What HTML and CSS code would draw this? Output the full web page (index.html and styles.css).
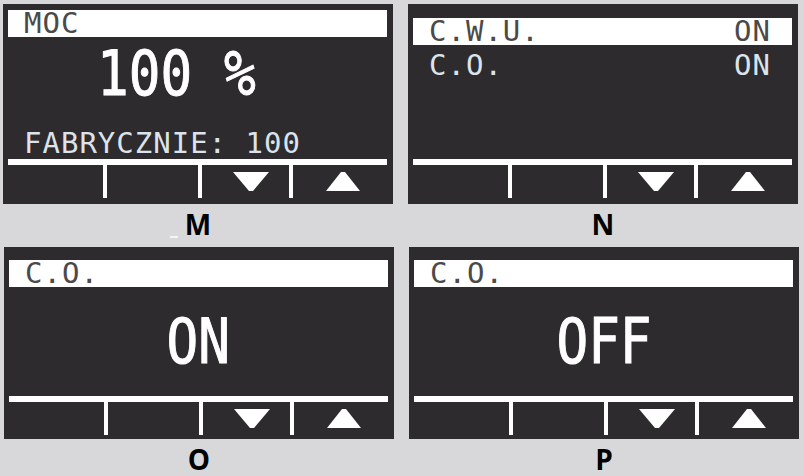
FILE: index.html
```html
<!DOCTYPE html>
<html lang="pl">
<head>
  <meta charset="UTF-8" />
  <meta name="viewport" content="width=device-width, initial-scale=1.0"/>
  <title>Ekrany sterownika</title>
  <link rel="stylesheet" href="styles.css">
</head>
<body>
  <div class="sheet">

    <!-- M: moc -->
    <div class="cell">
      <div class="panel panel-value">
        <div class="title">MOC</div>
        <div class="content">
          <div class="big big-left"><span>100 %</span></div>
          <div class="caption">FABRYCZNIE: 100</div>
        </div>
        <div class="keys">
          <div class="key"></div>
          <div class="key"></div>
          <div class="key key-down">
            <svg width="36" height="19" viewBox="0 0 36 19"><polygon points="0,0 36,0 20,19 16,19" fill="#fff"/></svg>
          </div>
          <div class="key key-up">
            <svg width="34" height="19" viewBox="0 0 34 19"><polygon points="15,0 19,0 34,19 0,19" fill="#fff"/></svg>
          </div>
        </div>
      </div>
      <div class="label"><span class="stray"></span>M</div>
    </div>

    <!-- N: lista -->
    <div class="cell">
      <div class="panel panel-list">
        <div class="menu">
          <div class="row selected"><span>C.W.U.</span><span>ON</span></div>
          <div class="row"><span>C.O.</span><span>ON</span></div>
        </div>
        <div class="keys">
          <div class="key"></div>
          <div class="key"></div>
          <div class="key key-down">
            <svg width="36" height="19" viewBox="0 0 36 19"><polygon points="0,0 36,0 20,19 16,19" fill="#fff"/></svg>
          </div>
          <div class="key key-up">
            <svg width="34" height="19" viewBox="0 0 34 19"><polygon points="15,0 19,0 34,19 0,19" fill="#fff"/></svg>
          </div>
        </div>
      </div>
      <div class="label">N</div>
    </div>

    <!-- O: C.O. on -->
    <div class="cell cell-low">
      <div class="panel panel-set">
        <div class="title">C.O.</div>
        <div class="content content-center">
          <div class="big"><span>ON</span></div>
        </div>
        <div class="keys">
          <div class="key"></div>
          <div class="key"></div>
          <div class="key key-down">
            <svg width="36" height="19" viewBox="0 0 36 19"><polygon points="0,0 36,0 20,19 16,19" fill="#fff"/></svg>
          </div>
          <div class="key key-up">
            <svg width="34" height="19" viewBox="0 0 34 19"><polygon points="15,0 19,0 34,19 0,19" fill="#fff"/></svg>
          </div>
        </div>
      </div>
      <div class="label">O</div>
    </div>

    <!-- P: C.O. off -->
    <div class="cell cell-low">
      <div class="panel panel-set">
        <div class="title">C.O.</div>
        <div class="content content-center">
          <div class="big"><span>OFF</span></div>
        </div>
        <div class="keys">
          <div class="key"></div>
          <div class="key"></div>
          <div class="key key-down">
            <svg width="36" height="19" viewBox="0 0 36 19"><polygon points="0,0 36,0 20,19 16,19" fill="#fff"/></svg>
          </div>
          <div class="key key-up">
            <svg width="34" height="19" viewBox="0 0 34 19"><polygon points="15,0 19,0 34,19 0,19" fill="#fff"/></svg>
          </div>
        </div>
      </div>
      <div class="label">P</div>
    </div>

  </div>
</body>
</html>
```

FILE: styles.css
```css
* {
  box-sizing: border-box;
  margin: 0;
  padding: 0;
}

html, body {
  width: 804px;
  height: 476px;
  overflow: hidden;
  background: #d8d8da;
}

.sheet {
  display: grid;
  grid-template-columns: 390px 390px;
  column-gap: 15px;
  row-gap: 10px;
  padding: 4px 0 0 3px;
}

.cell {
  display: flex;
  flex-direction: column;
  align-items: center;
}

.cell-low {
  margin-left: 2px;
}

/* LCD panel */
.panel {
  width: 390px;
  height: 200px;
  display: flex;
  flex-direction: column;
  padding: 6px 6px 6px 5px;
  background: #2d2b2e;
  font-family: "DejaVu Sans Mono", "Liberation Mono", monospace;
}

.panel-list {
  padding-top: 14px;
}

.panel-set {
  height: 192px;
  padding-top: 13px;
  padding-bottom: 4px;
}

.title,
.row {
  height: 27px;
  line-height: 27px;
  font-size: 29px;
  letter-spacing: 1px;
  padding-left: 16px;
  color: #dde3ea;
}

.title,
.row.selected {
  background: #fff;
  color: #4a4a4a;
}

.menu {
  display: flex;
  flex-direction: column;
  gap: 7px;
  flex: 1;
}

.row {
  display: flex;
  justify-content: space-between;
  padding-right: 21px;
}

.content {
  flex: 1;
  display: flex;
  flex-direction: column;
}

.content-center {
  justify-content: center;
  align-items: center;
}

.big {
  font-size: 62px;
  line-height: 62px;
  color: #fff;
}

.big span {
  display: inline-block;
  transform: scaleX(0.85);
  -webkit-text-stroke: 1px #fff;
}

.big-left {
  margin-top: 6px;
  padding-left: 89px;
}

.big-left span {
  transform-origin: left center;
}

.caption {
  margin-top: auto;
  margin-bottom: 2px;
  height: 27px;
  line-height: 27px;
  font-size: 29px;
  letter-spacing: 1px;
  padding-left: 16px;
  color: #dde3ea;
}

/* button strip */
.keys {
  height: 39px;
  border-top: 6px solid #fff;
  display: grid;
  grid-template-columns: 95px 95px 91px 1fr;
}

.key {
  display: flex;
  align-items: center;
}

.key + .key {
  border-left: 4px solid #fff;
}

.key-down {
  padding-left: 31px;
}

.key-up {
  padding-left: 33px;
}

.key svg {
  display: block;
}

/* caption under each screen */
.label {
  margin-top: 7px;
  font-family: "Open Sans", "Liberation Sans", sans-serif;
  font-weight: 700;
  font-size: 28px;
  line-height: 26px;
  color: #000;
}

.stray {
  display: inline-block;
  width: 8px;
  height: 2px;
  margin: 0 7px -3px -15px;
  background: #f4f4f4;
}
```
